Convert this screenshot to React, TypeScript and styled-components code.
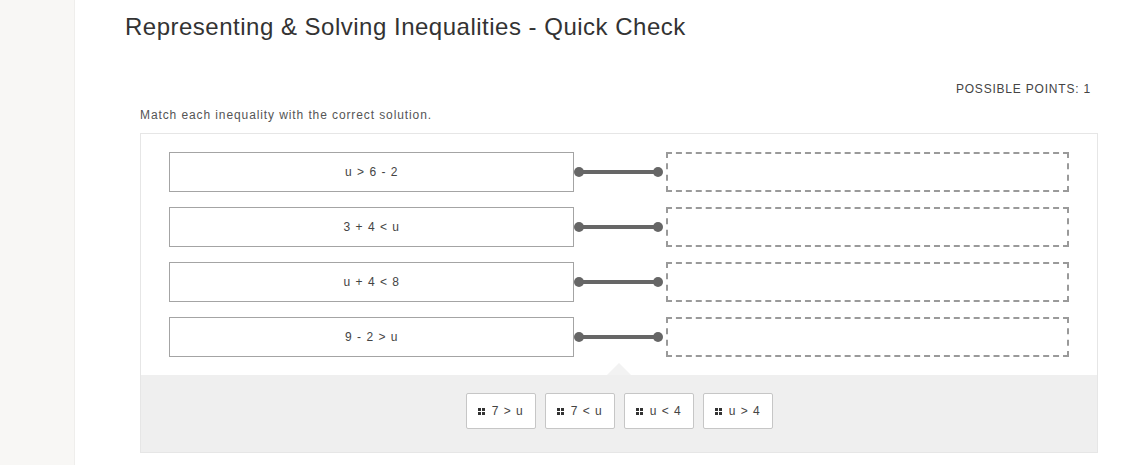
import React from "react";
import styled, { createGlobalStyle } from "styled-components";

const GlobalStyle = createGlobalStyle`
  html, body {
    margin: 0;
    padding: 0;
    background: #ffffff;
    font-family: "Liberation Sans", Arial, sans-serif;
    color: #333;
  }
`;

const Page = styled.div`
  display: flex;
  width: 1121px;
  height: 465px;
  overflow: hidden;
`;

const Sidebar = styled.div`
  width: 75px;
  flex-shrink: 0;
  background: #f8f7f5;
  border-right: 1px solid #efeeec;
  box-sizing: border-box;
`;

const Main = styled.div`
  flex: 1;
  padding: 13px 23px 0 50px;
  display: flex;
  flex-direction: column;
`;

const Title = styled.h1`
  margin: 0;
  font-size: 24px;
  line-height: 28px;
  font-weight: normal;
  letter-spacing: 0.5px;
  color: #333;
`;

const Points = styled.div`
  margin-top: 40px;
  padding-right: 7px;
  text-align: right;
  font-size: 12px;
  line-height: 16px;
  letter-spacing: 0.8px;
  color: #444;
`;

const Instruction = styled.div`
  margin-top: 10px;
  padding-left: 15px;
  font-size: 12px;
  line-height: 16px;
  letter-spacing: 0.9px;
  color: #555;
`;

const Panel = styled.div`
  margin: 10px 0 0 15px;
  border: 1px solid #e6e6e6;
  display: flex;
  flex-direction: column;
`;

const Rows = styled.div`
  display: flex;
  flex-direction: column;
  gap: 15px;
  padding: 18px 28px;
`;

const Row = styled.div`
  display: flex;
  align-items: center;
  height: 40px;
`;

const Prompt = styled.div`
  width: 405px;
  height: 40px;
  box-sizing: border-box;
  border: 1px solid #a4a4a4;
  display: flex;
  align-items: center;
  justify-content: center;
  font-size: 12px;
  color: #444;
  letter-spacing: 0.5px;
  word-spacing: 1px;
`;

const Target = styled.div`
  flex: 1;
  height: 40px;
  box-sizing: border-box;
  border: 2px dashed #9a9a9a;
`;

const Tray = styled.div`
  position: relative;
  background: #efefef;
  height: 77px;
  box-sizing: border-box;
  padding-top: 18px;
  display: flex;
  justify-content: center;
  align-items: flex-start;
  gap: 9px;

  &::before {
    content: "";
    position: absolute;
    left: 50%;
    top: -12px;
    margin-left: -12px;
    border-left: 12px solid transparent;
    border-right: 12px solid transparent;
    border-bottom: 12px solid #f2f2f2;
  }
`;

const Chip = styled.div`
  width: 70px;
  height: 36px;
  box-sizing: border-box;
  background: #fff;
  border: 1px solid #c6c6c6;
  border-radius: 2px;
  display: flex;
  align-items: center;
  justify-content: center;
  gap: 7px;
  font-size: 12px;
  color: #444;
  letter-spacing: 0.5px;
  word-spacing: 1px;
`;

const Connector = () => (
  <svg width="92" height="40" viewBox="0 0 92 40">
    <line x1="5" y1="20" x2="84" y2="20" stroke="#666" strokeWidth="4" />
    <circle cx="5" cy="20" r="5" fill="#666" />
    <circle cx="84" cy="20" r="5" fill="#666" />
  </svg>
);

const Grip = () => (
  <svg width="7" height="7" viewBox="0 0 7 7">
    <rect x="0" y="0" width="3" height="3" fill="#333" />
    <rect x="4" y="0" width="3" height="3" fill="#333" />
    <rect x="0" y="4" width="3" height="3" fill="#333" />
    <rect x="4" y="4" width="3" height="3" fill="#333" />
  </svg>
);

const prompts = ["u > 6 - 2", "3 + 4 < u", "u + 4 < 8", "9 - 2 > u"];
const answers = ["7 > u", "7 < u", "u < 4", "u > 4"];

const App = () => {
  return (
    <Page>
      <GlobalStyle />
      <Sidebar />
      <Main>
        <Title>Representing &amp; Solving Inequalities - Quick Check</Title>
        <Points>POSSIBLE POINTS: 1</Points>
        <Instruction>Match each inequality with the correct solution.</Instruction>
        <Panel>
          <Rows>
            {prompts.map((p) => (
              <Row key={p}>
                <Prompt>{p}</Prompt>
                <Connector />
                <Target />
              </Row>
            ))}
          </Rows>
          <Tray>
            {answers.map((a) => (
              <Chip key={a}>
                <Grip />
                <span>{a}</span>
              </Chip>
            ))}
          </Tray>
        </Panel>
      </Main>
    </Page>
  );
};

export default App;
